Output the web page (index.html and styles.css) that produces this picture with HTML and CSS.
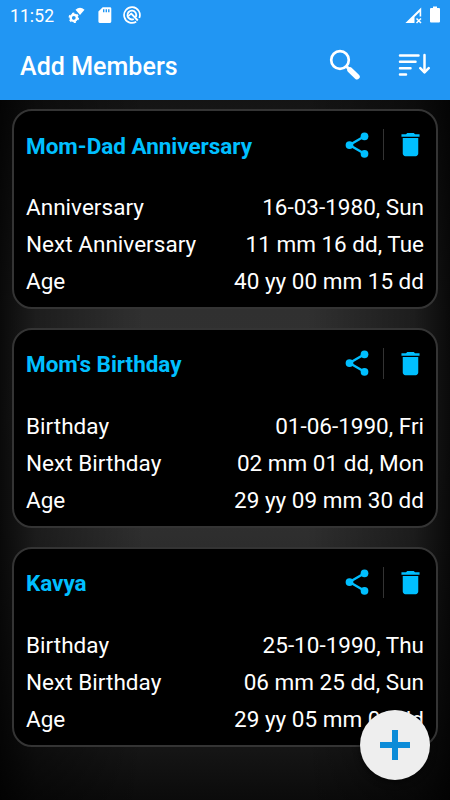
FILE: index.html
```html
<!DOCTYPE html>
<html lang="en">
<head>
<meta charset="utf-8">
<title>Add Members</title>
<link rel="stylesheet" href="styles.css">
</head>
<body>
<svg width="0" height="0" class="defs">
  <symbol id="share" viewBox="0 0 24 24"><path d="M18 5L6 12l12 7" fill="none" stroke="currentColor" stroke-width="1.9"/><circle cx="18" cy="5" r="3.1"/><circle cx="6" cy="12" r="3.1"/><circle cx="18" cy="19" r="3.1"/></symbol>
  <symbol id="trash" viewBox="0 0 24 24"><path d="M6 19c0 1.1.9 2 2 2h8c1.100 0 2-.9 2-2V7H6zM19 4h-3.500l-1-1h-5l-1 1H5v2h14z"/></symbol>
</svg>
<div class="app">
  <header>
    <div class="status">
      <span class="time">11:52</span>
      <svg class="st-gear" width="17" height="18" viewBox="0 0 17 18"><circle cx="5.800" cy="10.800" r="3.100" fill="none" stroke="#fff" stroke-width="2.400"/><circle cx="5.800" cy="10.800" r="4.500" fill="none" stroke="#fff" stroke-width="1.500" stroke-dasharray="2.300 2.412"/><path d="M7.500 2.700Q12-1 16.500 2.700L12 8z" fill="#fff"/></svg>
      <svg class="st-sd" width="14" height="17" viewBox="0 0 14 17"><path fill="#fff" fill-rule="evenodd" d="M4.700 .3H12q1.300 0 1.300 1.300v13q0 1.300-1.300 1.300H1.700Q.4 15.900 .4 14.600V4.600zM5 2.300v3h1.400v-3zm2.600 0v3H9v-3zm2.500 0v3h1.400v-3z"/></svg>
      <svg class="st-q" width="18" height="18" viewBox="0 0 18 18" fill="none" stroke="#fff"><path stroke-width="1.700" d="M13.200 15.700A7.900 7.900 0 1 1 16.300 12"/><path stroke-width="1.900" d="M12.900 10.800A4.400 4.400 0 1 0 10.800 13M7.800 7.200l7 7.300"/><path stroke-width="1.500" d="M5.300 10.200l3-2.500"/></svg>
      <svg class="st-signal" width="17" height="17" viewBox="0 0 17 17"><path fill="#fff" d="M.4 16L16.200.5v9h-1.600V5L9.500 10v6z"/><path stroke="#fff" stroke-width="1.500" d="M11.500 11.500l4.500 4.500m0-4.500l-4.500 4.500"/></svg>
      <svg class="st-battery" width="10" height="17" viewBox="0 0 10 17"><path fill="#fff" d="M3 .5h4V2h2q1 0 1 1v12.500q0 1-1 1H1q-1 0-1-1V3q0-1 1-1h2z"/></svg>
    </div>
    <div class="bar">
      <h1>Add Members</h1>
      <svg class="search" width="32" height="32" viewBox="0 0 32 32" fill="none" stroke="#fff"><circle cx="11" cy="11" r="8.800" stroke-width="2.700"/><path stroke-width="3" d="M17 17l4 4"/><path stroke-width="5.500" stroke-linecap="round" d="M21 21l7 6.700"/></svg>
      <svg class="sort" width="32" height="24" viewBox="0 0 32 24" fill="none" stroke="#fff" stroke-width="2.500" stroke-linecap="round"><path d="M2 2.500h18.500M2 8.700h15.500M2 15.200h10.500M2 21.500h6"/><path d="M26.500 2v17"/><path stroke-linejoin="round" d="M22.300 15.200l4.200 4.200 4.200-4.200"/></svg>
    </div>
  </header>
  <main>
    <section class="card">
      <div class="head"><h2>Mom-Dad Anniversary</h2><svg class="share"><use href="#share"/></svg><i class="rule"></i><svg class="trash"><use href="#trash"/></svg></div>
      <dl>
        <div><dt>Anniversary</dt><dd>16-03-1980, Sun</dd></div>
        <div><dt>Next Anniversary</dt><dd>11 mm 16 dd, Tue</dd></div>
        <div><dt>Age</dt><dd>40 yy 00 mm 15 dd</dd></div>
      </dl>
    </section>
    <section class="card">
      <div class="head"><h2>Mom's Birthday</h2><svg class="share"><use href="#share"/></svg><i class="rule"></i><svg class="trash"><use href="#trash"/></svg></div>
      <dl>
        <div><dt>Birthday</dt><dd>01-06-1990, Fri</dd></div>
        <div><dt>Next Birthday</dt><dd>02 mm 01 dd, Mon</dd></div>
        <div><dt>Age</dt><dd>29 yy 09 mm 30 dd</dd></div>
      </dl>
    </section>
    <section class="card">
      <div class="head"><h2>Kavya</h2><svg class="share"><use href="#share"/></svg><i class="rule"></i><svg class="trash"><use href="#trash"/></svg></div>
      <dl>
        <div><dt>Birthday</dt><dd>25-10-1990, Thu</dd></div>
        <div><dt>Next Birthday</dt><dd>06 mm 25 dd, Sun</dd></div>
        <div><dt>Age</dt><dd>29 yy 05 mm 06 dd</dd></div>
      </dl>
    </section>
  </main>
  <button class="fab" aria-label="Add"><svg width="30" height="30" viewBox="0 0 30 30"><path d="M12 0h6v12h12v6H18v12h-6V18H0v-6h12z"/></svg></button>
</div>
</body>
</html>
```
FILE: styles.css
```css
* { box-sizing: border-box; }
body { margin: 0; background: #000; }
.defs { position: absolute; }
.app {
  position: relative;
  width: 450px;
  height: 800px;
  overflow: hidden;
  font-family: Roboto, sans-serif;
  background:
    linear-gradient(90deg, rgba(0,0,0,.8), rgba(0,0,0,.4) 8%, rgba(0,0,0,0) 32%, rgba(0,0,0,0) 68%, rgba(0,0,0,.4) 92%, rgba(0,0,0,.8)),
    linear-gradient(#141414 100px, #303030 310px, #323232 420px, #2e2e2e 535px, #151515 750px, #0b0b0b 800px);
}
header { height: 100px; background: #2196f3; color: #fff; }
.status { display: flex; align-items: flex-start; height: 30px; padding: 7px 10px 0; }
.time { width: 58px; font-size: 17.500px; line-height: 18px; letter-spacing: .1px; }
.st-sd { margin-left: 13px; }
.st-q { margin-left: 11px; margin-top: -1px; }
.st-signal { margin-left: auto; }
.st-battery { margin: -1px 0 0 8px; }
.status svg { flex: none; }
.bar { display: flex; align-items: center; height: 70px; padding: 0 20px 0 20px; }
h1 { flex: 1; margin: 0; font-size: 25px; font-weight: 500; line-height: 30px; padding-top: 3px; letter-spacing: .05px; }
.search { margin-top: 0; }
.sort { margin-left: 37px; }
main { display: grid; gap: 18.750px; padding: 9px 12px 0; }
.card {
  height: 200px;
  padding: 11px 12px 0 12px;
  background: #000;
  border: 2px solid #343434;
  border-radius: 20px;
  color: #fff;
}
.head { display: flex; align-items: center; height: 45px; color: #00bfff; }
h2 { flex: 1; margin: 0; font-size: 22.500px; font-weight: 700; line-height: 28px; padding-top: 2px; letter-spacing: -.03px; }
.head svg { fill: currentColor; flex: none; }
.share { width: 30px; height: 30px; margin-right: 11px; }
.rule { width: 1px; height: 31px; background: #333; }
.trash { width: 31px; height: 31px; margin: 0 -1.500px 0 10.500px; }
dl { margin: 22.400px 0 0; font-size: 22.500px; line-height: 36.900px; }
dl div { display: flex; justify-content: space-between; }
dt { letter-spacing: .03px; }
dd { margin: 0; }
.fab {
  position: absolute;
  left: 360px;
  top: 710px;
  display: grid;
  place-items: center;
  width: 70px;
  height: 70px;
  padding: 0;
  border: 0;
  border-radius: 50%;
  background: #eee;
  box-shadow: 0 3px 6px rgba(0,0,0,.5);
}
.fab svg { fill: #0c8cd8; }
```
